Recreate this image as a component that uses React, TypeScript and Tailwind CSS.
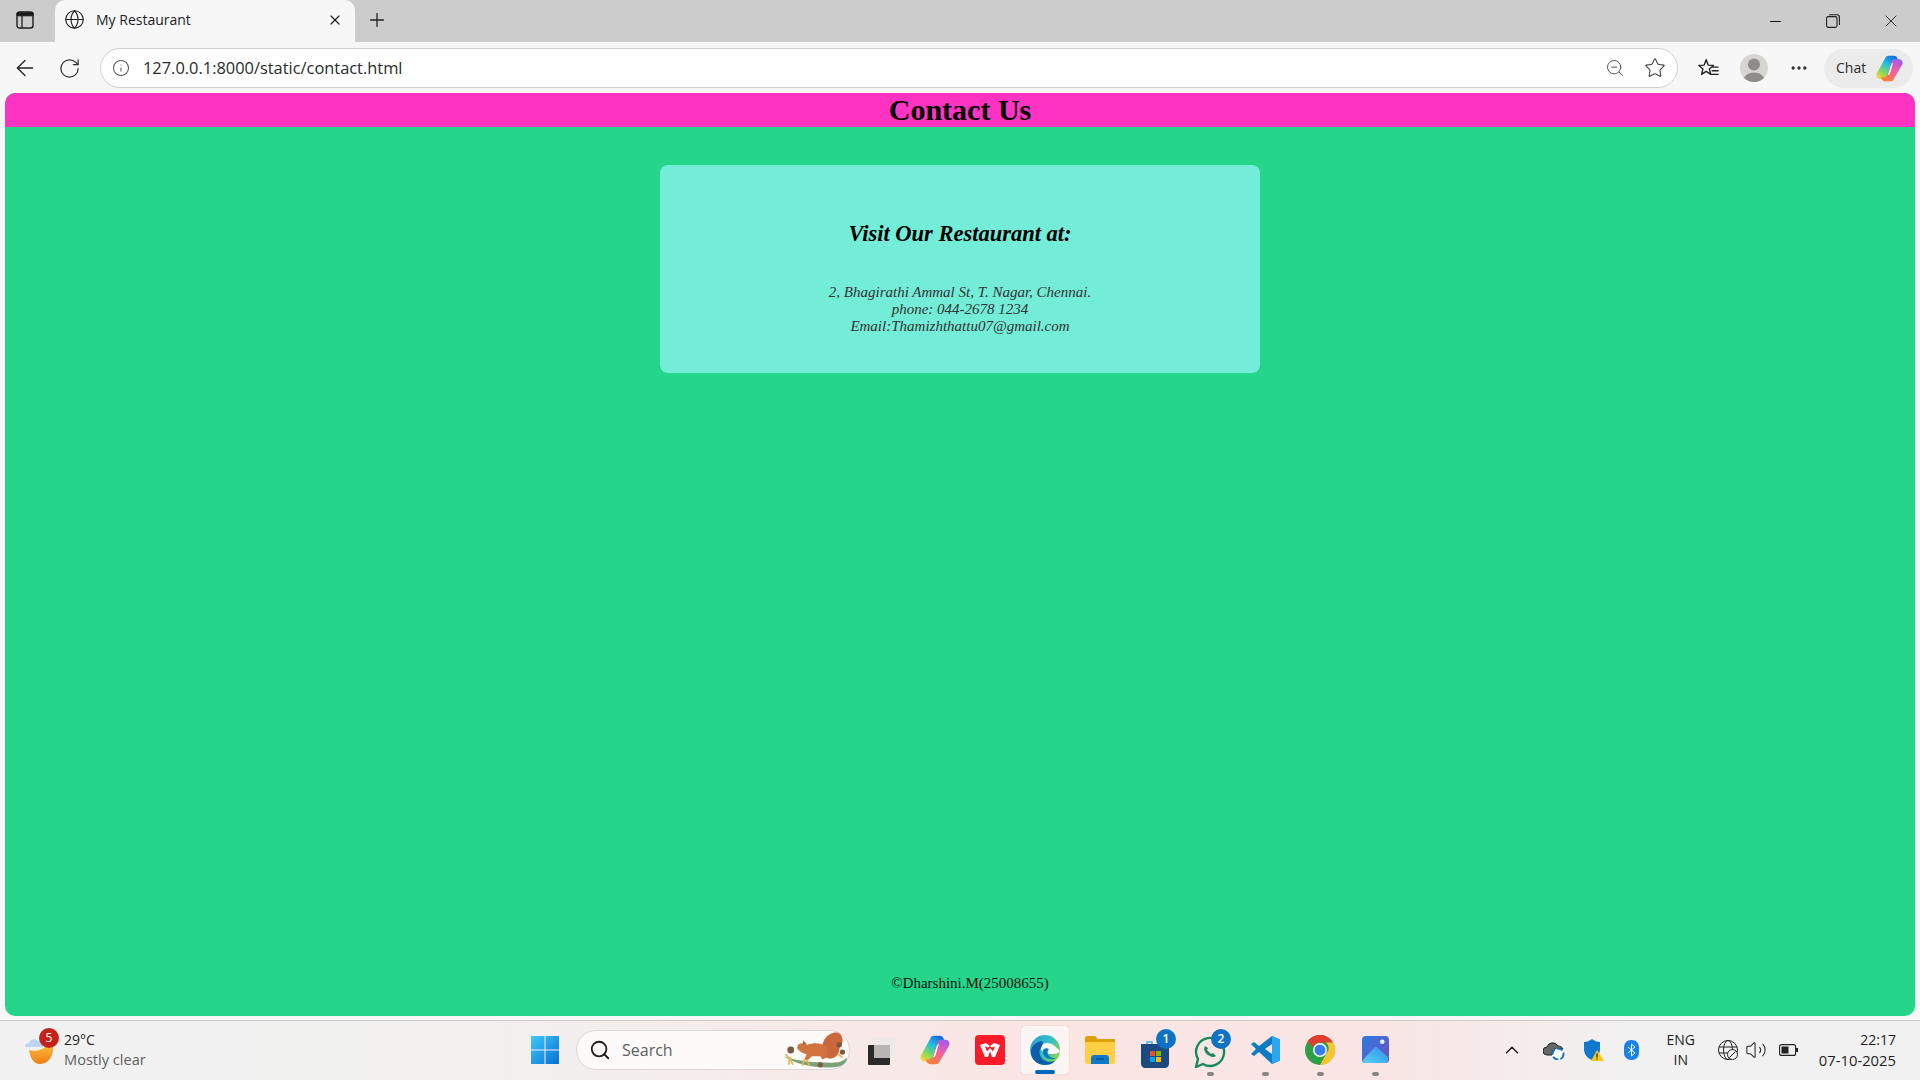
import { ArrowLeft, ChevronUp, Globe, Info, Minus, MoreHorizontal, Plus, RotateCw, Search, Star, Volume2, X, ZoomOut } from "lucide-react";

const uiFont = "font-['Open_Sans','Noto_Sans',sans-serif]";
const serif = "font-['Liberation_Serif',serif]";

function CopilotLogo({ id, size }: { id: string; size: number }) {
  return (
    <svg width={size} height={size} viewBox="0 0 24 24">
      <defs>
        <linearGradient id={`${id}a`} x1="0.75" y1="0" x2="0.15" y2="1">
          <stop offset="0" stopColor="#1668e3" />
          <stop offset="0.4" stopColor="#22c3dc" />
          <stop offset="0.75" stopColor="#8fd94f" />
          <stop offset="1" stopColor="#f6d743" />
        </linearGradient>
        <linearGradient id={`${id}b`} x1="0.85" y1="0" x2="0.3" y2="1">
          <stop offset="0" stopColor="#9a5cf0" />
          <stop offset="0.5" stopColor="#f05fa5" />
          <stop offset="1" stopColor="#f9803a" />
        </linearGradient>
      </defs>
      <path d="M8.6 3.2C9.1 2 10.1 1.4 11.3 1.4h4.4c1.2 0 2.2.7 2.7 1.9l1.2 3.5H17c-1.6 0-3 1-3.5 2.6L10.5 18.5c-.5 1.3-1.6 2.1-3 2.1H4.2C2 20.6.6 18.5 1.3 16.4z" fill={`url(#${id}a)`} />
      <path d="M15.4 20.8c-.5 1.2-1.5 1.8-2.7 1.8H8.3c-1.2 0-2.2-.7-2.7-1.9l-.6-1.6h2c1.6 0 3-1 3.5-2.6L13.6 6.4c.5-1.3 1.6-2.1 3-2.1h3.2c2.2 0 3.6 2.1 2.9 4.2z" fill={`url(#${id}b)`} />
      <path d="M10.6 17.6 13.3 9.2c.2-.8.8-1.5 1.6-1.8L12.6 15.5c-.3.9-1 1.7-2 2.1z" fill="#ffffff" />
    </svg>
  );
}

function TabStrip() {
  return (
    <div className="flex h-[42px] items-end bg-[#cccccc]">
      <div className="flex w-[55px] justify-center pb-[13px] pr-[6px]">
        <svg width="18" height="18" viewBox="0 0 18 18" fill="none" stroke="#1c1c1c">
          <rect x="1" y="1" width="16" height="16" rx="2.5" strokeWidth="1.4" />
          <path d="M1 1.8h16v3H1z" fill="#1c1c1c" />
          <path d="M6 4v13" strokeWidth="1.3" />
        </svg>
      </div>
      <div className="flex h-[42px] w-[300px] items-center rounded-t-[10px] bg-[#f7f7f7] pb-[3px] pl-[9px] pr-[12px]">
        <Globe size={21} strokeWidth={1.3} color="#222222" />
        <span className={`ml-[11px] flex-1 text-[14px] text-[#1e1e1e] ${uiFont}`}>My Restaurant</span>
        <X size={16} strokeWidth={1.8} color="#222222" />
      </div>
      <div className="flex w-[42px] justify-center pb-[11px] pl-[1px]">
        <Plus size={22} strokeWidth={1.4} color="#222222" />
      </div>
      <div className="ml-auto flex h-[42px] items-center">
        <div className="flex w-[58px] justify-center pl-[1px]">
          <Minus size={17} strokeWidth={1.4} color="#111111" />
        </div>
        <div className="flex w-[58px] justify-center">
          <svg width="14" height="14" viewBox="0 0 14 14" fill="none" stroke="#222222" strokeWidth="1.1">
            <rect x="0.6" y="2.6" width="10.4" height="10.8" rx="1.6" />
            <path d="M3 .7h8.2c1.2 0 2.2 1 2.2 2.2V11" />
          </svg>
        </div>
        <div className="flex w-[58px] justify-center">
          <X size={20} strokeWidth={1.1} color="#222222" />
        </div>
      </div>
    </div>
  );
}

function Toolbar() {
  return (
    <div className="flex h-[51px] items-center bg-[#f7f7f7] pt-[1px]">
      <div className="flex w-[100px] items-center pl-[12px]">
        <ArrowLeft size={26} strokeWidth={1.2} color="#222222" />
        <RotateCw size={23} strokeWidth={1.3} color="#333333" className="ml-[20px]" />
      </div>
      <div className="flex h-[40px] w-[1578px] items-center rounded-full border border-[#cfcfcf] bg-white pl-[11px] pr-[11px]">
        <Info size={18} strokeWidth={1.4} color="#555555" />
        <span className={`ml-[13px] flex-1 text-[16.4px] text-[#2b2b2b] ${uiFont}`}>127.0.0.1:8000/static/contact.html</span>
        <ZoomOut size={20} strokeWidth={1.2} color="#555555" className="ml-[1px]" />
        <Star size={22} strokeWidth={1.2} color="#444444" className="ml-[19px]" />
      </div>
      <div className="ml-[19px] flex items-center">
        <svg width="22" height="22" viewBox="0 0 24 24" fill="none" stroke="#222222" strokeWidth="1.5" strokeLinejoin="round">
          <path d="M10 3 12.2 8.8 18 9.2 13.5 13 15 19 10 15.7 5 19 6.5 13 2 9.2 7.8 8.8z" />
          <path d="M17 11h6M16.5 15h6.5M15.8 19h7.2" strokeLinecap="round" />
        </svg>
        <div className="ml-[21px] flex h-[28px] w-[28px] items-end justify-center overflow-hidden rounded-full bg-[#d6d5d1]">
          <svg width="28" height="28" viewBox="0 0 28 28" fill="#8f8b86">
            <circle cx="14" cy="10.5" r="6" />
            <ellipse cx="14" cy="25" rx="10" ry="6.5" />
          </svg>
        </div>
        <MoreHorizontal size={20} strokeWidth={2} color="#333333" className="ml-[21px]" />
      </div>
      <div className="ml-[15px] flex h-[39px] w-[89px] items-center rounded-full bg-[#ebebeb] pl-[12px]">
        <span className={`pb-[2px] text-[14px] text-[#2b2b2b] ${uiFont}`}>Chat</span>
        <span className="ml-[9px]">
          <CopilotLogo id="chat" size={29} />
        </span>
      </div>
    </div>
  );
}

function Page() {
  return (
    <div className="flex h-[923px] flex-col overflow-hidden rounded-[10px] bg-[#25d68a]">
      <h1 className={`h-[34px] rounded-t-[10px] bg-[#ff33c2] text-center text-[30px] leading-[34px] font-bold text-black ${serif}`}>
        Contact Us
      </h1>
      <div className={`mx-auto mt-[38px] flex h-[208px] w-[600px] flex-col items-center rounded-[8px] bg-[#73ecd8] pt-[56px] ${serif}`}>
        <h2 className="text-[22.5px] leading-[25px] font-bold text-black italic">Visit Our Restaurant at:</h2>
        <p className="mt-[38px] text-center text-[15px] leading-[17px] text-[#333333] italic">
          2, Bhagirathi Ammal St, T. Nagar, Chennai.
          <br />
          phone: 044-2678 1234
          <br />
          Email:Thamizhthattu07@gmail.com
        </p>
      </div>
      <footer className={`mt-auto pb-[24px] pl-[20px] text-center text-[15px] leading-[17px] text-[#111111] ${serif}`}>
        ©Dharshini.M(25008655)
      </footer>
    </div>
  );
}

function Slot({ active, running, children }: { active?: boolean; running?: boolean; children: React.ReactNode }) {
  return (
    <div className={`relative flex h-[48px] w-[48px] items-center justify-center rounded-[4px] ${active ? "bg-[#fbf5f5] shadow-[0_0_1px_#00000040]" : ""}`}>
      {children}
      {active && <span className="absolute bottom-[0px] h-[4px] w-[20px] rounded-full bg-[#0067c0]" />}
      {running && <span className="absolute bottom-[-2px] h-[4px] w-[7px] rounded-full bg-[#8a8582]" />}
    </div>
  );
}

function Badge({ n }: { n: number }) {
  return (
    <span className={`absolute right-[-3px] top-[-3px] flex h-[20px] w-[20px] items-center justify-center rounded-full bg-[#0f72c5] text-[12px] font-semibold text-white ${uiFont}`}>
      {n}
    </span>
  );
}

function Squirrel() {
  return (
    <svg width="68" height="38" viewBox="0 0 64 36">
      <path d="M2 24c14 5 30 6 44 6 7 0 13-1 16-5 1 4-3 8-10 9-16 2-35-1-50-10z" fill="#7ea277" />
      <path d="M40 24c-3-8-1-17 6-21 5-3 11-2 12 4 1 6-3 7-3 11 0 5-6 9-10 8z" fill="#c9683a" />
      <path d="M16 13c2-2 6-1 9 0 5-2 12-2 16 1 3 3 3 8 2 11l-4 2-2-3-8 0-4 4-3-1 2-5c-4-1-7-3-9-6z" fill="#d0733f" />
      <path d="M20 13l1-4 3 3z" fill="#b55e31" />
      <circle cx="9" cy="18" r="3.2" fill="#7b5a3d" />
      <circle cx="55" cy="13" r="2.5" fill="#7b5a3d" />
      <circle cx="58" cy="20" r="2.5" fill="#7b5a3d" />
      <circle cx="37" cy="32" r="2.5" fill="#7b5a3d" />
      <path d="M4 22l4 4-1 6M8 25l3 7M22 27l-2 6M24 27l3 6M54 22l4 3" stroke="#e2b84b" strokeWidth="1.6" fill="none" />
    </svg>
  );
}

function Taskbar() {
  return (
    <div className="flex h-[60px] items-center border-t border-[#cfcaca] bg-[linear-gradient(90deg,#f1f1f1_0%,#f2f1f0_25%,#fae5e3_55%,#f9e6e4_72%,#f1f1f1_85%)] pb-[2px]">
      <div className="flex w-[525px] items-center pl-[25px]">
        <div className="relative h-[36px] w-[36px]">
          <svg width="30" height="32" viewBox="0 0 30 32" className="mt-[1px]">
            <defs>
              <linearGradient id="moon" x1="0.5" y1="0" x2="0.5" y2="1">
                <stop offset="0" stopColor="#fbbf3a" />
                <stop offset="1" stopColor="#ee7d14" />
              </linearGradient>
            </defs>
            <path d="M4 17c7 2 15 0 19-6l5 1c1 10-4 19-13 19-6 0-10-6-11-14z" fill="url(#moon)" />
            <path d="M0 14c0-3 2-4 4-4 1-4 7-5 9-2 3 0 5 2 5 6z" fill="#bcd4f5" />
          </svg>
          <span className={`absolute left-[14px] top-[-4px] flex h-[20px] w-[20px] items-center justify-center rounded-full bg-[#c4231a] text-[12px] text-white ${uiFont}`}>5</span>
        </div>
        <div className={`ml-[3px] flex flex-col ${uiFont}`}>
          <span className="text-[14px] leading-[20px] text-[#1f1f1f]">29°C</span>
          <span className="text-[14.6px] leading-[19px] text-[#5f5f5f]">Mostly clear</span>
        </div>
      </div>
      <div className="flex w-[40px] justify-center">
        <svg width="30" height="30" viewBox="0 0 30 30">
          <defs>
            <linearGradient id="win" x1="0" y1="0" x2="1" y2="1">
              <stop offset="0" stopColor="#3fc9fb" />
              <stop offset="1" stopColor="#0a6fd2" />
            </linearGradient>
          </defs>
          <path d="M1 1h13.5v13.5H1zM15.5 1H29v13.5H15.5zM1 15.5h13.5V29H1zM15.5 15.5H29V29H15.5z" fill="url(#win)" />
        </svg>
      </div>
      <div className="ml-[11px] flex h-[40px] w-[274px] items-center rounded-full border border-[#ddd6d6] bg-[#fdfafa] pl-[12px]">
        <Search size={22} strokeWidth={2} color="#1f1f1f" />
        <span className={`ml-[11px] flex-1 text-[16px] text-[#5f5f5f] ${uiFont}`}>Search</span>
        <Squirrel />
      </div>
      <div className="ml-[6px] flex items-center gap-[7px]">
        <Slot>
          <svg width="30" height="30" viewBox="0 0 30 30">
            <rect x="9" y="3" width="22" height="20" rx="1" fill="#ece9e9" />
            <rect x="3" y="10" width="22" height="20" rx="1" fill="#2a2a2a" />
            <rect x="9" y="10" width="16" height="13" fill="#b9b5b5" />
          </svg>
        </Slot>
        <Slot>
          <CopilotLogo id="bar" size={32} />
        </Slot>
        <Slot>
          <svg width="30" height="30" viewBox="0 0 30 30">
            <rect width="30" height="30" rx="4" fill="#fb1a2a" />
            <path d="M5 10l6-2 4 3 4-3 6 2-5 12h-3l-2-6-2 6h-3z" fill="#ffffff" />
            <path d="M10 11.5l2 5 3-3.5 3 3.5 2-5-3 1-2-1.5-2 1.5z" fill="#fb1a2a" />
          </svg>
        </Slot>
        <Slot active>
          <svg width="32" height="32" viewBox="0 0 32 32">
            <defs>
              <linearGradient id="edge" x1="0" y1="0" x2="1" y2="0.6">
                <stop offset="0" stopColor="#2a9fd8" />
                <stop offset="0.6" stopColor="#35c1c0" />
                <stop offset="1" stopColor="#7fd44f" />
              </linearGradient>
            </defs>
            <circle cx="16" cy="16" r="15" fill="url(#edge)" />
            <path d="M31 17c-1 3-6 3-11 3-5 0-8-3-8-6 0-2 2-5 6-5 5 0 8 3 13 8z" fill="#fbfafa" />
            <path d="M13 7C6 8 2 13 2 18c0 7 6 13 14 13 4 0 7-1 10-4-6 2-12 0-14-4-2-3-2-7 0-9 1-3 3-5 1-7z" fill="#0c5ea9" />
            <path d="M20 15c-3-2-7 0-6 4 1 5 7 8 14 5-4 1-8-1-9-4-1-2 0-4 1-5z" fill="#0b7dc2" />
          </svg>
        </Slot>
        <Slot>
          <svg width="32" height="28" viewBox="0 0 32 28">
            <path d="M1 2c0-1 1-2 2-2h8l3 3h17v6H1z" fill="#e0a106" />
            <path d="M1 6h30v20c0 1-1 2-2 2H3c-1 0-2-1-2-2z" fill="#fccf44" />
            <path d="M7 28v-6c0-2 1-3 3-3h12c2 0 3 1 3 3v6z" fill="#0f78c8" />
            <path d="M12 23h8" stroke="#0a4f8c" strokeWidth="1.4" />
          </svg>
        </Slot>
        <Slot>
          <span className="relative flex h-[36px] w-[36px] items-end justify-center">
            <svg width="30" height="30" viewBox="0 0 30 30">
              <path d="M7 4h5v3H7z" fill="none" stroke="#46b5f0" strokeWidth="1.5" />
              <path d="M1 6h28v20c0 2-2 4-4 4H5c-2 0-4-2-4-4z" fill="#1c4a80" />
              <rect x="10" y="13" width="5" height="5" fill="#f25022" />
              <rect x="16" y="13" width="5" height="5" fill="#7fba00" />
              <rect x="10" y="19" width="5" height="5" fill="#00a4ef" />
              <rect x="16" y="19" width="5" height="5" fill="#ffb900" />
            </svg>
            <Badge n={1} />
          </span>
        </Slot>
        <Slot running>
          <span className="relative flex h-[36px] w-[36px] items-end justify-center">
            <svg width="32" height="32" viewBox="0 0 32 32" fill="none" stroke="#18895a" strokeWidth="2.4">
              <path d="M2 31l2-8a14 14 0 1 1 5 5z" strokeLinejoin="round" />
              <path d="M11 10c-2 3 0 7 3 9s6 3 8 1l-3-3-2 1-4-4 1-2z" fill="#18895a" stroke="none" />
            </svg>
            <Badge n={2} />
          </span>
        </Slot>
        <Slot running>
          <svg width="30" height="30" viewBox="0 0 30 30">
            <path d="M22 1l8 3.5v21L22 29 9 17l-5 4-3-2 5-5-5-5 3-2 5 4z" fill="#0b7cc4" />
            <path d="M22 1l8 3.5v21L22 29z" fill="#2aa5ee" />
            <path d="M22 9l-7 5 7 5z" fill="#f5e6e4" />
          </svg>
        </Slot>
        <Slot running>
          <svg width="30" height="30" viewBox="0 0 30 30">
            <circle cx="15" cy="15" r="15" fill="#2f9e44" />
            <path d="M15 0a15 15 0 0 1 13 7.5H15a7.5 7.5 0 0 0-7 4.5L2.5 6.5A15 15 0 0 1 15 0z" fill="#e53c30" />
            <path d="M28 7.5A15 15 0 0 1 15 30l6.5-11.5A7.5 7.5 0 0 0 21 7.5z" fill="#fbc531" />
            <circle cx="15" cy="15" r="7" fill="#ffffff" />
            <circle cx="15" cy="15" r="5.5" fill="#3b7df0" />
          </svg>
        </Slot>
        <Slot running>
          <svg width="27" height="27" viewBox="0 0 28 28">
            <defs>
              <linearGradient id="pho" x1="0" y1="0" x2="1" y2="1">
                <stop offset="0" stopColor="#2c7ce0" />
                <stop offset="1" stopColor="#6f4fc0" />
              </linearGradient>
              <linearGradient id="mtn" x1="0" y1="1" x2="1" y2="0">
                <stop offset="0" stopColor="#55d2f6" />
                <stop offset="1" stopColor="#2f8fe8" />
              </linearGradient>
            </defs>
            <rect width="28" height="28" rx="4" fill="url(#pho)" />
            <circle cx="21" cy="6" r="2.4" fill="#e6eefc" />
            <path d="M1 25l12-13c1-1 2-1 3 0l11 10v2c0 2-1 4-3 4H4c-2 0-3-1-3-3z" fill="url(#mtn)" />
          </svg>
        </Slot>
      </div>
      <div className="ml-auto flex items-center pr-[24px]">
        <ChevronUp size={22} strokeWidth={1.6} color="#1f1f1f" className="ml-[1px]" />
        <svg width="22" height="20" viewBox="0 0 22 20" className="ml-[20px]">
          <path d="M4 15a4 4 0 0 1 0-8 6 6 0 0 1 11-1c2 0 4 1 5 3H13c-3 0-4 3-4 6z" fill="#666666" stroke="#222222" strokeWidth="1" />
          <circle cx="15" cy="14" r="5.5" fill="#ffffff" stroke="#0f72c5" strokeWidth="1.8" strokeDasharray="6 2" />
        </svg>
        <svg width="22" height="24" viewBox="0 0 22 24" className="ml-[18px]">
          <path d="M9 1c3 2 5 3 8 3v7c0 5-3 9-8 11-5-2-8-6-8-11V4c3 0 5-1 8-3z" fill="#1178d0" />
          <path d="M14 12l7 11H8z" fill="#f5c518" />
          <path d="M14 15.5v4M14 20.5v1" stroke="#222222" strokeWidth="1.2" />
        </svg>
        <div className="ml-[19px] flex h-[20px] w-[15px] items-center justify-center rounded-[7px] bg-[#1783ea]">
          <svg width="9" height="14" viewBox="0 0 9 14" fill="none" stroke="#ffffff" strokeWidth="1">
            <path d="M1 4l7 6-3.5 3V1L8 4l-7 6" />
          </svg>
        </div>
        <div className={`ml-[22px] flex w-[40px] flex-col items-center text-[14px] leading-[20px] text-[#1f1f1f] ${uiFont}`}>
          <span>ENG</span>
          <span>IN</span>
        </div>
        <svg width="22" height="22" viewBox="0 0 22 22" fill="none" stroke="#222222" strokeWidth="1" className="ml-[16px]">
          <circle cx="11" cy="11" r="9.5" />
          <ellipse cx="11" cy="11" rx="4.5" ry="9.5" />
          <path d="M2 8h18M2 14h18" />
          <circle cx="15.5" cy="15.5" r="5" fill="#f1f1f1" />
          <path d="M12.5 18.5l6-6" />
        </svg>
        <Volume2 size={22} strokeWidth={1.1} color="#222222" className="ml-[6px]" />
        <svg width="20" height="14" viewBox="0 0 20 14" className="ml-[12px]" fill="none" stroke="#222222" strokeWidth="1.1">
          <rect x="0.6" y="1.6" width="16" height="10.8" rx="2" />
          <rect x="2.5" y="3.5" width="7" height="7" fill="#222222" stroke="none" />
          <path d="M18 5v4" strokeWidth="2" />
        </svg>
        <div className={`ml-[20px] flex flex-col items-end leading-[20px] text-[#1f1f1f] ${uiFont}`}>
          <span className="text-[14px]">22:17</span>
          <span className="text-[14.8px]">07-10-2025</span>
        </div>
      </div>
    </div>
  );
}

export default function App() {
  return (
    <div className="flex h-screen w-full flex-col overflow-hidden bg-[#f7f7f7]">
      <TabStrip />
      <Toolbar />
      <div className="px-[5px] pb-[4px]">
        <Page />
      </div>
      <Taskbar />
    </div>
  );
}
